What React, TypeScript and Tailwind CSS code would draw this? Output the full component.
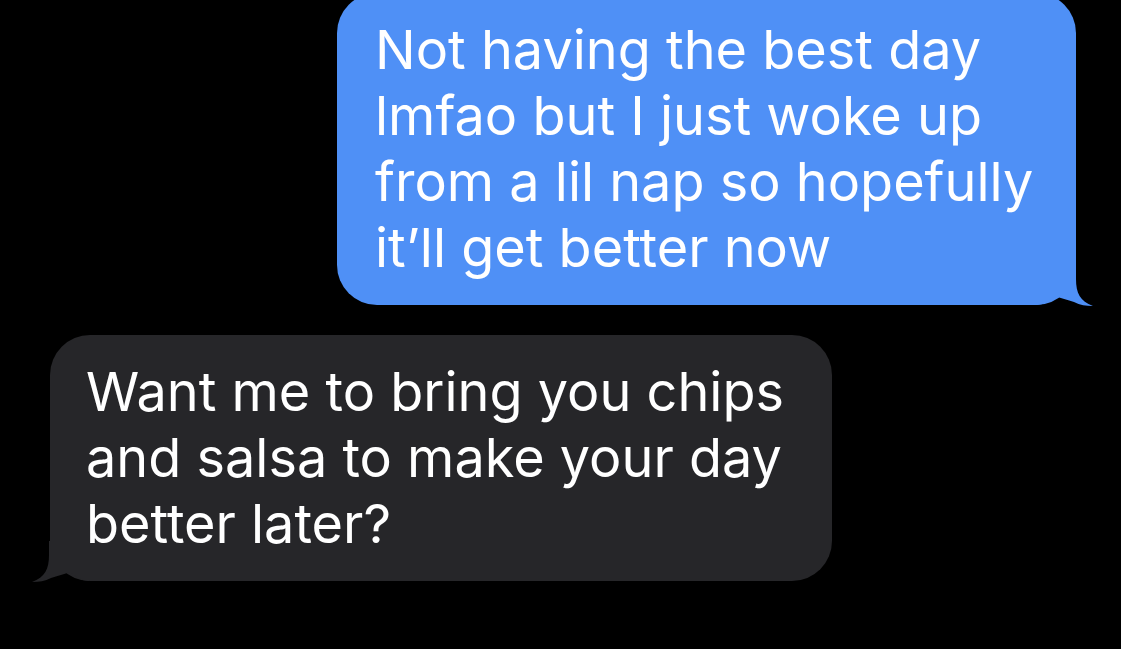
export default function App() {
  const font = { fontFamily: 'Inter, "Liberation Sans", sans-serif' };
  return (
    <div className="w-[1121px] h-[649px] bg-black overflow-hidden flex flex-col" style={font}>
      {/* Sent */}
      <div className="relative self-end mr-[45px] -mt-[7px] w-[739px] rounded-[40px] bg-[#4f90f6] pl-[38px] pr-[20px] py-[24px] text-white text-[54px] leading-[66px] tracking-[0px]">
        <p className="relative z-10 whitespace-nowrap">
          Not having the best day
          <br />
          lmfao but I just woke up
          <br />
          from a lil nap so hopefully
          <br />
          it’ll get better now
        </p>
        <svg className="absolute right-[-17px] bottom-[-1px]" width="57" height="41" viewBox="0 0 57 41">
          <path d="M0 0 H40 V14 C40 28 44 36 57 41 C50 41 44 40 38 37 C32 35 24 33 19 31 C14 35 8 40 0 40 Z" fill="#4f90f6" />
        </svg>
      </div>

      {/* Received */}
      <div className="relative self-start ml-[50px] mt-[30px] w-[782px] rounded-[40px] bg-[#262629] pl-[36px] pr-[20px] py-[24px] text-white text-[54px] leading-[66px] tracking-[0px]">
        <p className="relative z-10 whitespace-nowrap">
          Want me to bring you chips
          <br />
          and salsa to make your day
          <br />
          better later?
        </p>
        <svg className="absolute left-[-18px] bottom-[-1px]" width="57" height="41" viewBox="0 0 57 41">
          <path d="M57 0 H17 V14 C17 28 13 36 0 41 C7 41 13 40 19 37 C25 35 33 33 38 31 C43 35 49 40 57 40 Z" fill="#262629" />
        </svg>
      </div>
    </div>
  );
}
